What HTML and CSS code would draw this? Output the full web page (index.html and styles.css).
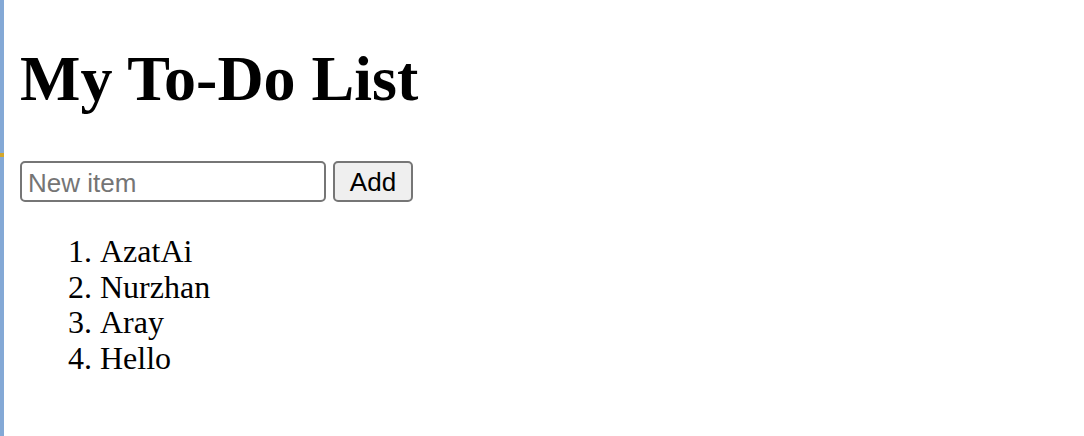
FILE: index.html
```html
<!DOCTYPE html>
<html lang="en">
<head>
  <meta charset="UTF-8">
  <meta name="viewport" content="width=device-width, initial-scale=1.0">
  <title>My To-Do List</title>
  <link rel="stylesheet" href="styles.css">
</head>
<body>
  <div class="edge"><span class="edge-mark"></span></div>
  <main class="page">
    <h1>My To-Do List</h1>
    <div class="add-row">
      <input type="text" class="item-input" placeholder="New item">
      <button class="add-button">Add</button>
    </div>
    <ol class="todo-list">
      <li>AzatAi</li>
      <li>Nurzhan</li>
      <li>Aray</li>
      <li>Hello</li>
    </ol>
  </main>
</body>
</html>
```

FILE: styles.css
```css
* {
  box-sizing: border-box;
}

body {
  margin: 0;
  display: flex;
  min-height: 100vh;
  font-family: "Liberation Serif", "Times New Roman", serif;
  font-size: 32px;
  color: #000;
  background: #fff;
}

.edge {
  width: 4px;
  flex-shrink: 0;
  background: #84a9d6;
  position: relative;
}

.edge-mark {
  position: absolute;
  left: 0;
  top: 153px;
  width: 4px;
  height: 4px;
  background: #d4a72c;
}

.page {
  flex: 1;
  padding: 42px 16px 16px;
}

h1 {
  font-size: 64px;
  font-weight: bold;
  margin: 0 0 45px;
  line-height: 74px;
}

.add-row {
  display: flex;
  align-items: center;
  gap: 7px;
}

.item-input {
  width: 306px;
  height: 41px;
  padding: 3px 6px 0;
  font-family: "Liberation Sans", Arial, sans-serif;
  font-size: 26px;
  border: 2px solid #767676;
  border-radius: 5px;
  color: #000;
}

.item-input::placeholder {
  color: #757575;
}

.add-button {
  width: 80px;
  height: 41px;
  padding: 2px 0 0;
  font-family: "Liberation Sans", Arial, sans-serif;
  font-size: 26px;
  background: #efefef;
  border: 2px solid #767676;
  border-radius: 5px;
  color: #000;
}

.todo-list {
  margin: 32px 0;
  padding-left: 80px;
  line-height: 35.6px;
}
```
